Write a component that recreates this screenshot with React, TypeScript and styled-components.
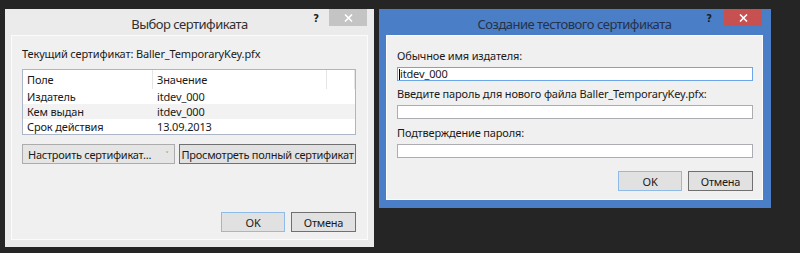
import styled, { createGlobalStyle, css } from "styled-components";

const GlobalStyle = createGlobalStyle`
  html, body {
    margin: 0;
    padding: 0;
    background: #252525;
  }
  body {
    font-family: "Noto Sans", "Open Sans", sans-serif;
    font-size: 11px;
    letter-spacing: -0.15px;
    color: #1a1a1a;
  }
`;

const Desktop = styled.div`
  display: flex;
  align-items: flex-start;
  gap: 5px;
  padding: 9px 0 0 5px;
  width: 800px;
  height: 253px;
  box-sizing: border-box;
  overflow: hidden;
`;

const Window = styled.div<{ $active?: boolean; $width: number }>`
  width: ${(p) => p.$width}px;
  box-sizing: border-box;
  display: flex;
  flex-direction: column;
  background: ${(p) => (p.$active ? "#4a7ec6" : "#ebebeb")};
  padding: 0 ${(p) => (p.$active ? "8px 8px 7px" : "6px 7px 6px")};
`;

const TitleBar = styled.div`
  position: relative;
  height: 26px;
  display: flex;
  align-items: center;
  justify-content: center;
`;

const Title = styled.div<{ $active?: boolean }>`
  font-size: 13px;
  letter-spacing: -0.5px;
  color: ${(p) => (p.$active ? "#25324a" : "#303030")};
  padding-top: 3px;
`;

const Help = styled.span<{ $right: number }>`
  position: absolute;
  top: 4px;
  right: ${(p) => p.$right}px;
  font-family: "DejaVu Sans", sans-serif;
  font-weight: bold;
  font-size: 10px;
  color: #1e1e1e;
`;

const Close = styled.div<{ $active?: boolean }>`
  position: absolute;
  top: 0;
  right: 1px;
  width: 38px;
  height: 17px;
  background: ${(p) => (p.$active ? "#c75050" : "#c4c4c4")};
  display: flex;
  align-items: center;
  justify-content: center;
`;

const Client = styled.div<{ $height: number }>`
  height: ${(p) => p.$height}px;
  box-sizing: border-box;
  background: #f0f0f0;
  border: 1px solid #fbfbfb;
  padding: 0 10px 0 10px;
  display: flex;
  flex-direction: column;
`;

const Text = styled.div<{ $top: number }>`
  margin-top: ${(p) => p.$top}px;
  line-height: 16px;
  height: 16px;
  white-space: nowrap;
`;

const List = styled.div`
  margin-top: 7px;
  width: 334px;
  border: 1px solid #adb6c7;
  background: #fff;
  box-sizing: border-box;
`;

const ListRow = styled.div<{ $head?: boolean; $alt?: boolean }>`
  display: grid;
  grid-template-columns: 130px 174px 1fr;
  height: ${(p) => (p.$head ? 19 : 15)}px;
  line-height: ${(p) => (p.$head ? 19 : 15)}px;
  background: ${(p) => (p.$alt ? "#f2f2f2" : "#fff")};
  ${(p) =>
    p.$head &&
    css`
      > span {
        border-right: 1px solid #e5e5e5;
      }
    `}
`;

const Cell = styled.span`
  padding-left: 4px;
  white-space: nowrap;
  overflow: hidden;
`;

const ButtonRow = styled.div<{ $top: number; $end?: boolean; $w: number }>`
  display: flex;
  gap: ${(p) => (p.$end ? 6 : 4)}px;
  margin-top: ${(p) => p.$top}px;
  justify-content: ${(p) => (p.$end ? "flex-end" : "flex-start")};
  width: ${(p) => p.$w}px;
`;

const Button = styled.div<{ $w: number; $border?: string; $bg?: string }>`
  width: ${(p) => p.$w}px;
  height: 20px;
  box-sizing: border-box;
  border: 1px solid ${(p) => p.$border ?? "#acacac"};
  background: ${(p) => p.$bg ?? "#e1e1e1"};
  display: flex;
  align-items: center;
  justify-content: center;
  white-space: nowrap;
  letter-spacing: -0.25px;
`;

const SplitButton = styled(Button)`
  justify-content: space-between;
  padding: 0 6px 0 5px;
`;

const Chevron = styled.span`
  color: #666;
  font-size: 8px;
`;

const Input = styled.div<{ $focus?: boolean }>`
  margin-top: 3px;
  width: 356px;
  height: 14px;
  box-sizing: border-box;
  background: #fff;
  border: 1px solid ${(p) => (p.$focus ? "#6aa6e8" : "#abadb3")};
  display: flex;
  align-items: center;
  line-height: 12px;
  padding-left: 1px;
`;

const Caret = styled.span`
  width: 1px;
  height: 11px;
  background: #000;
`;

function CloseGlyph() {
  return (
    <svg width="9" height="8" viewBox="0 0 9 8">
      <path d="M1 0.5 L8 7.5 M8 0.5 L1 7.5" stroke="#fff" strokeWidth="1.6" />
    </svg>
  );
}

export default function App() {
  return (
    <>
      <GlobalStyle />
      <Desktop>
        <Window $width={369}>
          <TitleBar>
            <Title>Выбор сертификата</Title>
            <Help $right={49}>?</Help>
            <Close>
              <CloseGlyph />
            </Close>
          </TitleBar>
          <Client $height={205}>
            <Text $top={10}>Текущий сертификат: Baller_TemporaryKey.pfx</Text>
            <List>
              <ListRow $head>
                <Cell>Поле</Cell>
                <Cell>Значение</Cell>
                <Cell />
              </ListRow>
              <ListRow>
                <Cell>Издатель</Cell>
                <Cell>itdev_000</Cell>
              </ListRow>
              <ListRow $alt>
                <Cell>Кем выдан</Cell>
                <Cell>itdev_000</Cell>
              </ListRow>
              <ListRow>
                <Cell>Срок действия</Cell>
                <Cell>13.09.2013</Cell>
              </ListRow>
            </List>
            <ButtonRow $top={9} $w={334}>
              <SplitButton $w={153} $bg="#e5e5e5">
                <span>Настроить сертификат...</span>
                <Chevron>˅</Chevron>
              </SplitButton>
              <Button $w={177} $border="#707070">
                Просмотреть полный сертификат
              </Button>
            </ButtonRow>
            <ButtonRow $top={48} $end $w={334}>
              <Button $w={64} $border="#8fbbe8">
                OK
              </Button>
              <Button $w={65} $border="#707070">
                Отмена
              </Button>
            </ButtonRow>
          </Client>
        </Window>

        <Window $active $width={392}>
          <TitleBar>
            <Title $active>Создание тестового сертификата</Title>
            <Help $right={51}>?</Help>
            <Close $active>
              <CloseGlyph />
            </Close>
          </TitleBar>
          <Client $height={165}>
            <Text $top={12}>Обычное имя издателя:</Text>
            <Input $focus>
              <Caret />
              itdev_000
            </Input>
            <Text $top={5}>Введите пароль для нового файла Baller_TemporaryKey.pfx:</Text>
            <Input />
            <Text $top={6}>Подтверждение пароля:</Text>
            <Input />
            <ButtonRow $top={13} $end $w={356}>
              <Button $w={64} $border="#8fbbe8">
                OK
              </Button>
              <Button $w={65} $border="#707070">
                Отмена
              </Button>
            </ButtonRow>
          </Client>
        </Window>
      </Desktop>
    </>
  );
}
